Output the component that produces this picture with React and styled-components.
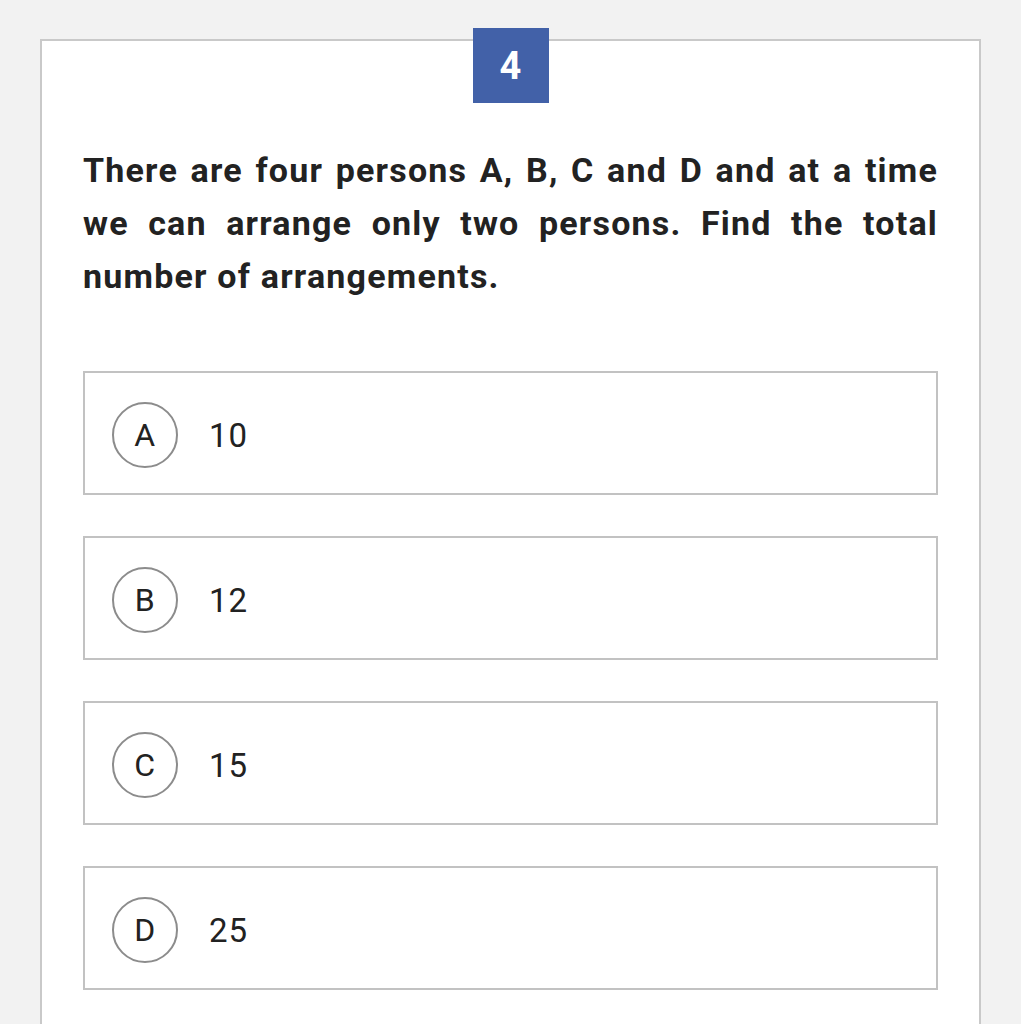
import styled, { createGlobalStyle } from "styled-components";

const GlobalStyle = createGlobalStyle`
    html, body {
        margin: 0;
        background-color: #f2f2f2;
        font-family: Roboto, "Noto Sans", sans-serif;
    }
`;

const Page = styled.div`
    padding: 39px 40px 0;
    height: 1024px;
    box-sizing: border-box;
    overflow: hidden;
`;

const Card = styled.div`
    background-color: #fff;
    border: 2px solid #c9c9c9;
    border-bottom: none;
    padding: 0 41px 60px;
    min-height: 1000px;
    box-sizing: border-box;
`;

const Badge = styled.div`
    width: 76px;
    height: 75px;
    margin: -13px auto 0;
    background-color: #4261a8;
    color: #fff;
    font-size: 38px;
    font-weight: 700;
    display: flex;
    align-items: center;
    justify-content: center;
`;

const Question = styled.p`
    margin: 41px 0 0;
    font-size: 34px;
    font-weight: 700;
    letter-spacing: 1.2px;
    line-height: 53px;
    color: #222;
    text-align: justify;
`;

const Options = styled.div`
    margin-top: 68px;
    display: flex;
    flex-direction: column;
    gap: 41px;
`;

const Option = styled.div`
    height: 124px;
    box-sizing: border-box;
    border: 2px solid #c2c2c2;
    display: flex;
    align-items: center;
    padding: 4px 0 0 27px;
    gap: 31px;
`;

const Letter = styled.span`
    width: 66px;
    height: 66px;
    box-sizing: border-box;
    border: 2px solid #8c8c8c;
    border-radius: 50%;
    display: flex;
    align-items: center;
    justify-content: center;
    font-size: 32px;
    letter-spacing: 0.5px;
    color: #222;
`;

const Value = styled.span`
    font-size: 33px;
    letter-spacing: 1px;
    color: #222;
`;

const options = [
    { key: "A", value: "10" },
    { key: "B", value: "12" },
    { key: "C", value: "15" },
    { key: "D", value: "25" },
];

function App() {
    return (
        <>
            <GlobalStyle />
            <Page>
                <Card>
                    <Badge>4</Badge>
                    <Question>
                        There are four persons A, B, C and D and at a time we can arrange only two persons. Find the total number of arrangements.
                    </Question>
                    <Options>
                        {options.map(o => (
                            <Option key={o.key}>
                                <Letter>{o.key}</Letter>
                                <Value>{o.value}</Value>
                            </Option>
                        ))}
                    </Options>
                </Card>
            </Page>
        </>
    );
}

export default App;
